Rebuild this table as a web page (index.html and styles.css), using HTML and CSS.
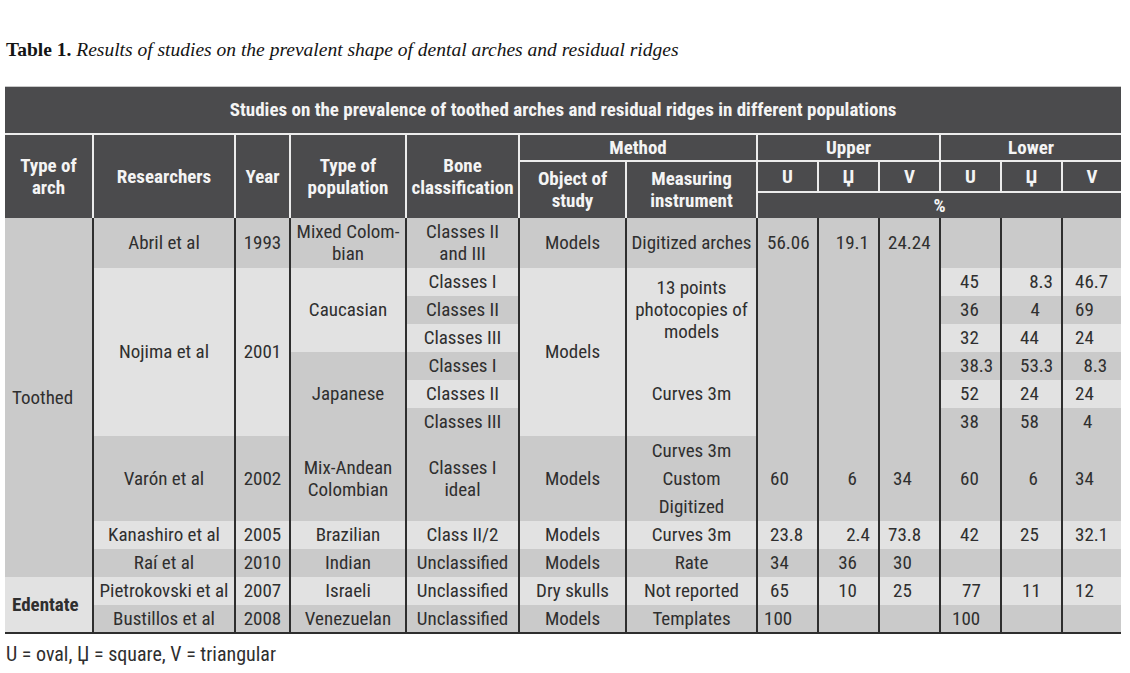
FILE: index.html
```html
<!DOCTYPE html>
<html lang="en">
<head>
<meta charset="utf-8">
<title>Table 1</title>
<link rel="stylesheet" href="styles.css">
</head>
<body>
<div class="page">
  <p class="caption"><b>Table 1.</b> <i>Results of studies on the prevalent shape of dental arches and residual ridges</i></p>
  <table class="data">
    <colgroup>
      <col class="c-arch"><col class="c-res"><col class="c-year"><col class="c-pop"><col class="c-bone"><col class="c-obj"><col class="c-meas">
      <col class="c-num"><col class="c-num"><col class="c-num"><col class="c-num"><col class="c-num"><col class="c-last">
    </colgroup>
    <thead>
      <tr class="h1"><th colspan="13" class="first">Studies on the prevalence of toothed arches and residual ridges in different populations</th></tr>
      <tr class="h2a">
        <th rowspan="3" class="first">Type of<br>arch</th>
        <th rowspan="3">Researchers</th>
        <th rowspan="3">Year</th>
        <th rowspan="3">Type of<br>population</th>
        <th rowspan="3">Bone<br>classification</th>
        <th colspan="2">Method</th>
        <th colspan="3">Upper</th>
        <th colspan="3">Lower</th>
      </tr>
      <tr class="h2b">
        <th rowspan="2">Object of<br>study</th>
        <th rowspan="2">Measuring<br>instrument</th>
        <th>U</th><th>Џ</th><th>V</th><th>U</th><th>Џ</th><th>V</th>
      </tr>
      <tr class="h2c"><th colspan="6">%</th></tr>
    </thead>
    <tbody>
      <tr class="r-abril">
        <td rowspan="10" class="first m">Toothed</td>
        <td class="m">Abril et al</td>
        <td class="m">1993</td>
        <td class="m">Mixed Colom-<br>bian</td>
        <td class="m">Classes II<br>and III</td>
        <td class="m">Models</td>
        <td class="m">Digitized arches</td>
        <td class="m n pl9">56.06</td>
        <td class="m r pr9">19.1</td>
        <td class="m n pl8">24.24</td>
        <td class="m"></td><td class="m"></td><td class="m"></td>
      </tr>
      <tr class="r-sub">
        <td rowspan="6" class="l">Nojima et al</td>
        <td rowspan="6" class="l">2001</td>
        <td rowspan="3" class="l">Caucasian</td>
        <td class="l">Classes I</td>
        <td rowspan="6" class="l">Models</td>
        <td rowspan="3" class="l">13 points<br>photocopies of<br>models</td>
        <td rowspan="6" class="m"></td><td rowspan="6" class="m"></td><td rowspan="6" class="m"></td>
        <td class="l n pl19">45</td>
        <td class="l r pr8">8.3</td>
        <td class="l n pl12">46.7</td>
      </tr>
      <tr class="r-sub">
        <td class="m">Classes II</td>
        <td class="m n pl19">36</td>
        <td class="m r pr21">4</td>
        <td class="m n pl12">69</td>
      </tr>
      <tr class="r-sub">
        <td class="l">Classes III</td>
        <td class="l n pl19">32</td>
        <td class="l n pl18">44</td>
        <td class="l n pl12">24</td>
      </tr>
      <tr class="r-sub">
        <td rowspan="3" class="m">Japanese</td>
        <td class="m">Classes I</td>
        <td rowspan="3" class="l">Curves 3m</td>
        <td class="m n pl19">38.3</td>
        <td class="m n pl18">53.3</td>
        <td class="m r pr14">8.3</td>
      </tr>
      <tr class="r-sub">
        <td class="l">Classes II</td>
        <td class="l n pl19">52</td>
        <td class="l n pl18">24</td>
        <td class="l n pl12">24</td>
      </tr>
      <tr class="r-sub">
        <td class="m">Classes III</td>
        <td class="m n pl19">38</td>
        <td class="m n pl18">58</td>
        <td class="m n pl20">4</td>
      </tr>
      <tr class="r-varon">
        <td class="m">Varón et al</td>
        <td class="m">2002</td>
        <td class="m">Mix-Andean<br>Colombian</td>
        <td class="m">Classes I<br>ideal</td>
        <td class="m">Models</td>
        <td class="m tall">Curves 3m<br>Custom<br>Digitized</td>
        <td class="m n pl12">60</td>
        <td class="m r pr21">6</td>
        <td class="m n pl13">34</td>
        <td class="m n pl19">60</td>
        <td class="m r pr23">6</td>
        <td class="m n pl12">34</td>
      </tr>
      <tr class="r-row">
        <td class="l">Kanashiro et al</td>
        <td class="l">2005</td>
        <td class="l">Brazilian</td>
        <td class="l">Class II/2</td>
        <td class="l">Models</td>
        <td class="l">Curves 3m</td>
        <td class="l n pl12">23.8</td>
        <td class="l r pr8">2.4</td>
        <td class="l n pl8">73.8</td>
        <td class="l n pl19">42</td>
        <td class="l n pl18">25</td>
        <td class="l n pl12">32.1</td>
      </tr>
      <tr class="r-row">
        <td class="m">Raí et al</td>
        <td class="m">2010</td>
        <td class="m">Indian</td>
        <td class="m">Unclassified</td>
        <td class="m">Models</td>
        <td class="m">Rate</td>
        <td class="m n pl12">34</td>
        <td class="m r pr21">36</td>
        <td class="m n pl13">30</td>
        <td class="m"></td><td class="m"></td><td class="m"></td>
      </tr>
      <tr class="r-row">
        <td rowspan="2" class="first l strong">Edentate</td>
        <td class="l">Pietrokovski et al</td>
        <td class="l">2007</td>
        <td class="l">Israeli</td>
        <td class="l">Unclassified</td>
        <td class="l">Dry skulls</td>
        <td class="l">Not reported</td>
        <td class="l n pl12">65</td>
        <td class="l r pr21">10</td>
        <td class="l n pl13">25</td>
        <td class="l n pl21">77</td>
        <td class="l n pl20">11</td>
        <td class="l n pl12">12</td>
      </tr>
      <tr class="r-last">
        <td class="m">Bustillos et al</td>
        <td class="m">2008</td>
        <td class="m">Venezuelan</td>
        <td class="m">Unclassified</td>
        <td class="m">Models</td>
        <td class="m">Templates</td>
        <td class="m n pl6">100</td>
        <td class="m"></td>
        <td class="m"></td>
        <td class="m n pl11">100</td>
        <td class="m"></td>
        <td class="m"></td>
      </tr>
    </tbody>
  </table>
  <p class="note">U = oval, Џ = square, V = triangular</p>
</div>
</body>
</html>
```

FILE: styles.css
```css
* {
  box-sizing: border-box;
}

html,
body {
  margin: 0;
  padding: 0;
  background: #ffffff;
}

.page {
  width: 1130px;
  padding: 39px 0 0 5px;
}

.caption {
  margin: 0 0 0 1px;
  height: 47px;
  font-family: "Liberation Serif", "Times New Roman", serif;
  font-size: 19.5px;
  line-height: 22px;
  color: #141414;
}

.data {
  width: 1116px;
  table-layout: fixed;
  border-collapse: separate;
  border-spacing: 0;
  border-top: 1px solid #c8c8c8;
  border-bottom: 2px solid #2e2e2e;
  font-family: "Roboto Condensed", "Liberation Sans Narrow", "Liberation Sans", sans-serif;
  font-size: 19px;
  line-height: 22px;
  color: #2f2f2f;
}

.c-arch { width: 87px; }
.c-res { width: 142px; }
.c-year { width: 55px; }
.c-pop { width: 116px; }
.c-bone { width: 113px; }
.c-obj { width: 107px; }
.c-meas { width: 131px; }
.c-num { width: 61px; }
.c-last { width: 60px; }

th {
  padding: 0;
  background: #4b4b4d;
  color: #f4f4f4;
  font-weight: bold;
  text-align: center;
  vertical-align: middle;
  border-left: 2px solid #ececec;
  white-space: nowrap;
}

th.first {
  border-left: none;
}

.h2a th,
.h2b th,
.h2c th {
  border-top: 2px solid #ececec;
}

.h1 { height: 46px; }
.h2a { height: 27px; }
.h2b { height: 31px; }
.h2c { height: 27px; }

td {
  padding: 0;
  text-align: center;
  vertical-align: middle;
  border-left: 2px solid #2e2e2e;
  white-space: nowrap;
}

td.first {
  border-left: none;
  text-align: left;
  padding-left: 7px;
}

.strong {
  font-weight: bold;
}

.l { background: #e2e2e2; }
.m { background: #cacaca; }

.r-abril { height: 50px; }
.r-sub { height: 28px; }
.r-varon { height: 85px; }
.r-row { height: 28px; }
.r-last { height: 27px; }

.tall {
  line-height: 28px;
}

.n { text-align: left; }
.r { text-align: right; }

.pl6 { padding-left: 6px; }
.pl8 { padding-left: 8px; }
.pl9 { padding-left: 9px; }
.pl11 { padding-left: 11px; }
.pl12 { padding-left: 12px; }
.pl13 { padding-left: 13px; }
.pl18 { padding-left: 18px; }
.pl19 { padding-left: 19px; }
.pl20 { padding-left: 20px; }
.pl21 { padding-left: 21px; }
.pr8 { padding-right: 8px; }
.pr9 { padding-right: 9px; }
.pr14 { padding-right: 14px; }
.pr21 { padding-right: 21px; }
.pr23 { padding-right: 23px; }

.note {
  margin: 9px 0 0 1px;
  font-family: "Roboto Condensed", "Liberation Sans Narrow", "Liberation Sans", sans-serif;
  font-size: 20px;
  line-height: 22px;
  color: #2f2f2f;
}
```
